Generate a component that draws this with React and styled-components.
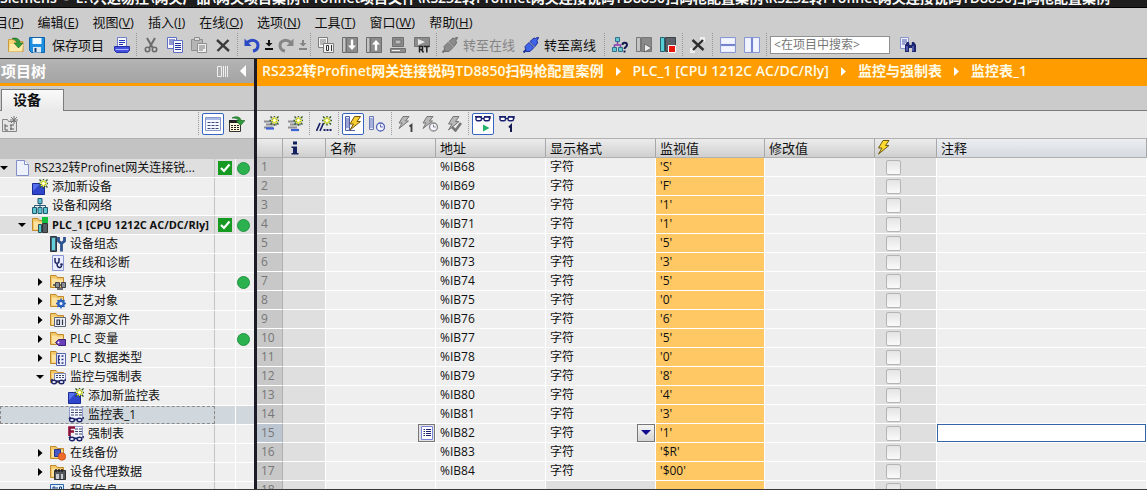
import React from 'react';
import styled, { createGlobalStyle, css } from 'styled-components';

const GlobalStyle = createGlobalStyle`
    * { box-sizing: border-box; }
    html, body, #root { height: 100%; }
    body {
        margin: 0;
        overflow: hidden;
        font-family: "Open Sans", "Noto Sans CJK SC", sans-serif;
        font-size: 12px;
        color: #101010;
        background: #cdcdcd;
    }
    button, input, select { font-family: inherit; font-size: inherit; color: inherit; }
`;

const PROJECT = 'RS232转Profinet网关连接锐码TD8850扫码枪配置案例';
const TITLE = `Siemens  -  E:\\兴达易控\\网关产品\\网关项目案例\\Profinet项目文件\\${PROJECT}\\${PROJECT}`;

const star = (x, y) => (
    <g transform={`translate(${x} ${y})`}>
        <path d="M0-5V5M-5 0H5M-4-4L4 4M4-4L-4 4" stroke="#2d5a32" strokeWidth="1.4" />
        <path d="M0-3.5V3.5M-3.5 0H3.5M-2.5-2.5L2.5 2.5M2.5-2.5L-2.5 2.5" stroke="#f6f23a" strokeWidth="1.2" />
        <circle r="1.4" fill="#fffff0" />
    </g>
);
const folder = (
    <g>
        <path d="M.5 1.5H6l1.5 2h6v10H.5z" fill="#f3c766" stroke="#c08a2c" />
        <path d="M2 4.5h4l1 1h6v7H2z" fill="#fbe2a0" />
    </g>
);
const glasses = (
    <g fill="#e8eeff" stroke="#1d2366" strokeWidth="1.4">
        <path d="M1 12.2L2.5 10M15 12.2L15.3 10M6 12.5h3" fill="none" />
        <ellipse cx="4" cy="13" rx="2.4" ry="1.8" />
        <ellipse cx="11.5" cy="13" rx="2.4" ry="1.8" />
    </g>
);
const spectacles = (
    <g fill="#fff" stroke="#1b2170" strokeWidth="1.4">
        <path d="M0 .8h7M9 .8h6v2" fill="none" />
        <rect x="1" y="1" width="5.500" height="3.800" rx="1.500" />
        <rect x="9" y="1" width="5.500" height="3.800" rx="1.500" />
        <path d="M6.500 2.500h2.500" />
    </g>
);
const sheet = (
    <g>
        <path d="M1.5.5h13v11h-13z" fill="#f3f5ff" stroke="#8f9bce" />
        <path d="M3 3h3M7 3h3M11 3h3M3 5.5h3M7 5.5h3M11 5.5h3M3 8h3M7 8h3M11 8h3" stroke="#3c4468" />
    </g>
);
const bolt = (fill, stroke) => <path d="M7 .5h6L9.500 5.500h3.500L2.500 14l3.500-6H2.500z" fill={fill} stroke={stroke} />;
const smallBolt = <path d="M5 .5h6L7.500 5h3L1 12.500 4 7H1z" fill="#b8b8b8" stroke="#777" />;
const clock = (stroke) => (
    <g fill="#f4f6ff" stroke={stroke}>
        <circle cx="11.5" cy="11" r="4" strokeWidth="1.3" />
        <path d="M11.5 8.5V11h2.3" fill="none" />
    </g>
);
const plug = (fill, stroke) => (
    <g fill={fill} stroke={stroke}>
        <path d="M.5 15.5l3-3" strokeWidth="2" />
        <path d="M2 9.500L6 5.500l5 5L7 14.500H3z" />
        <path d="M7 4.500L11 1l1.500.5L15 0l.5 1-1.500 2.500.5 2.500L12 9.500z" />
    </g>
);
const lines = (
    <path d="M1 5.5h9M3 8.5h11M1 11.5h9" stroke="#8e8e94" strokeWidth="2" fill="none" />
);

const icons = {
    open: <g><path d="M.5 2.5h5l1.500 2h8v10H.5z" fill="#f7d374" stroke="#c79a3d" /><path d="M2 7h13l-1 7.500H1z" fill="#fdeaa8" /><path d="M4 1.500c5-1.500 8 1 8 4.500h3l-4.500 5L6 6h3c0-2-2-3.500-5-4.500z" fill="#2f9a3a" stroke="#156320" strokeWidth=".6" /></g>,
    save: <g><path d="M.5.5h15v15h-13l-2-2z" fill="#1c8fe0" stroke="#1260a8" /><path d="M3.500 1h9v6h-9z" fill="#f4fbff" /><path d="M4 10h8v5.500H4z" fill="#dfe9f3" /><path d="M5.500 11h2v4h-2z" fill="#10457f" /></g>,
    print: <g><path d="M3.500.5h9v9h-9z" fill="#f5f7ff" stroke="#6f7fd0" /><path d="M5 3.500h6M5 5.500h6M5 7.500h4" stroke="#2733b0" /><path d="M.5 9.500h15v4l-2 2h-11l-2-2z" fill="#4450dd" stroke="#2530a8" /><path d="M1.500 12.500h13" stroke="#a9b2ff" /></g>,
    cut: <g fill="none" stroke="#6b6b6b"><path d="M4 1l5.500 9.500M12 1L6.500 10.500" strokeWidth="2" /><circle cx="4.500" cy="12.500" r="2.200" strokeWidth="1.600" /><circle cx="11.500" cy="12.500" r="2.200" strokeWidth="1.600" /></g>,
    copy: <g fill="#f8f9ff" stroke="#5f6fc4"><path d="M.5.5h9v11h-9z" /><path d="M2 3h6M2 5h6M2 7h6" stroke="#2632a0" /><path d="M6.500 3.500h9v12h-9z" /><path d="M8 6.500h6M8 8.500h6M8 10.500h6M8 12.500h6" stroke="#2632a0" /></g>,
    paste: <g stroke="#8f8f8f"><path d="M.5 2.500h11v11H.5z" fill="#b5b5b5" /><path d="M3.500.5h5v3h-5z" fill="#ddd" /><path d="M6.500 6.500h9v9h-9z" fill="#f0f0f0" /><path d="M8 9h6M8 11h6M8 13h4" stroke="#777" /></g>,
    del: <path d="M2 3l12 11M13.500 3L2.500 14" stroke="#3a3a3a" strokeWidth="2.400" fill="none" />,
    undo: <g fill="none" stroke="#2b49c4"><path d="M3 5.500c5-4 11-2 11 3 0 3-2 5-5 5.500" strokeWidth="3" /><path d="M.5 1.500v7.500h7z" fill="#2b49c4" stroke="none" /></g>,
    redo: <g fill="none" stroke="#858585"><path d="M13 5.500c-5-4-11-2-11 3 0 3 2 5 5 5.500" strokeWidth="3" /><path d="M15.500 1.500v7.500h-7z" fill="#858585" stroke="none" /></g>,
    compile: <g fill="#f2f2f2" stroke="#7c7c7c"><path d="M.5.5h9v10h-9z" /><path d="M2 3h6M2 5h6M2 7h3" /><path d="M5.500 6.500h10v9h-10z" /><path d="M8.500 8.500h2v5h-2zM13.500 8v6" stroke="#333" /></g>,
    download: <g><path d="M.5.500h3.500v15H.5z" fill="#c4c4c4" stroke="#6c6c6c" /><path d="M4.500.5h11v15h-11z" fill="#8b8b8b" stroke="#6c6c6c" /><path d="M8.800 2.500h2.400v6h2.800l-4 4.500-4-4.500h2.800z" fill="#fff" /></g>,
    upload: <g><path d="M.5.500h3.500v15H.5z" fill="#c4c4c4" stroke="#6c6c6c" /><path d="M4.500.5h11v15h-11z" fill="#8b8b8b" stroke="#6c6c6c" /><path d="M8.800 13.500h2.400v-6h2.800L10 3 6 7.500h2.800z" fill="#fff" /></g>,
    sim: <g fill="#8c8c8c" stroke="#6e6e6e"><path d="M2.500.5h11v9h-11z" /><path d="M5 3h6v4H5z" fill="#bbb" /><path d="M.5 11.500h15v4H.5z" /><path d="M2 13.500h8" stroke="#eee" /></g>,
    rt: <g><path d="M.5.5h15v9H.5z" fill="#8c8c8c" stroke="#737373" /><path d="M4 2l7 3-7 3z" fill="#e8e8e8" /><path d="M5.500 15.500v-6h3v3h-3m2 0l2 3M10 9.500h5.500M12.800 9.500v6" stroke="#222" strokeWidth="1.500" fill="none" /></g>,
    plugOff: plug('#8a8a8a', '#6f6f6f'),
    plugOn: plug('#4064e8', '#1c2f9c'),
    access: <g><path d="M3.500.5h4v4h-4zM.5 10.500h4v4h-4zM6.500 10.500h4v4h-4z" fill="#63c8cc" stroke="#2f6f8f" /><path d="M5.500 5v3M2.500 10V8h6v2" stroke="#8b3fae" fill="none" strokeWidth="1.500" /><path d="M10.500 8c0-3 4.500-3 4.500 0 0 2-2.500 2-2.500 4M12.500 13.500v2" stroke="#101850" strokeWidth="1.900" fill="none" /></g>,
    start: <g><path d="M.5.5h4v14h-4z" fill="#c4c4c4" stroke="#777" /><path d="M5.500.5h10v14h-10z" fill="#8a8a8a" stroke="#777" /><path d="M8.500 7l7 4-7 4z" fill="#eee" stroke="#555" strokeWidth=".7" /></g>,
    stop: <g><path d="M.5.5h4v14h-4z" fill="#56cdd2" stroke="#24626d" /><path d="M5.500.5h10v14h-10z" fill="#5b6168" stroke="#3d4247" /><path d="M8.500 8.500h7v7h-7z" fill="#e8140c" stroke="#fff" /></g>,
    cross: <g><path d="M0 11h5v5H0zM10 0h5v5h-5z" fill="#efefef" /><path d="M2.500 3l11 10M13 3L3 13" stroke="#2e2e2e" strokeWidth="2.400" /></g>,
    splitH: <g><path d="M.5.500h15v15H.5z" fill="#dfe6ff" stroke="#8b97cf" /><path d="M1 8h14" stroke="#5063bd" strokeWidth="1.500" /><path d="M1.500 1.500h13v5h-13zM1.500 9.500h13v5h-13z" fill="#fff" opacity=".6" /></g>,
    splitV: <g><path d="M.5.500h15v15H.5z" fill="#dfe6ff" stroke="#8b97cf" /><path d="M8 1v14" stroke="#5063bd" strokeWidth="1.500" /><path d="M1.500 1.500h5v13h-5zM9.500 1.500h5v13h-5z" fill="#fff" opacity=".6" /></g>,
    find: <g><path d="M.5.5h8v11h-8z" fill="#eef0ff" stroke="#8995cf" /><path d="M2 3h5M2 5h5M2 7h3" stroke="#4655a8" /><path d="M5 8l2-3h2l.5 3h2l.5-3h2l2 3v7h-4v-4H9v4H5z" fill="#1d2570" /><path d="M7 9v5M13 9v5" stroke="#7f8ae0" /></g>,
    newGroup: <g><path d="M.5 3.500h5l1 2h8v10H.5z" fill="#e4e4e4" stroke="#858585" /><path d="M3 8v6h3M3 10h3M8 9h4M8 13h4M9 9v5" stroke="#5d5d5d" fill="none" /><path d="M12 0v8M8 4h8M9 1l6 6M15 1L9 7" stroke="#777" /></g>,
    details: <g><path d="M.5 1.500h15v13H.5z" fill="#f6f8ff" stroke="#8797c8" /><path d="M1 3h14" stroke="#a9b9e8" strokeWidth="2" /><path d="M2.500 6.500h3M6.500 6.500h3M10.500 6.500h3M2.500 9.500h3M6.500 9.500h3M10.500 9.500h3M2.500 12.500h3M6.500 12.500h3M10.500 12.500h3" stroke="#3b4a77" /></g>,
    jump: <g><path d="M.5 4.500h11v11H.5z" fill="#fff6dc" stroke="#333" /><path d="M0 4h12v3H0z" fill="#222" /><path d="M2 9.500h8M2 11.500h8M2 13.500h8" stroke="#222" strokeDasharray="2 1" /><path d="M3 2c4-2.500 9-1 9 2.500h4L11.500 9.500 7 4.500h2.500C9 2.500 6 2 3 2z" fill="#2f9a3a" stroke="#186020" strokeWidth=".6" /></g>,
    insert: <g>{lines}<path d="M3 12.500h8" stroke="#3d62d8" strokeWidth="2.200" />{star(11.500, 4.500)}</g>,
    add: <g>{lines}<path d="M4 14h8" stroke="#3d62d8" strokeWidth="2.200" />{star(11.500, 4.500)}</g>,
    comment: <g><path d="M.500 15L4 7M4 15L7.500 7" stroke="#1c2366" strokeWidth="1.700" /><path d="M7.500 14h2M10.500 14h2M13.500 14h2" stroke="#1c2366" strokeWidth="2" />{star(11, 4.500)}</g>,
    watchAll: <g><path d="M.5.5h4v14h-4z" fill="#dfe5ff" stroke="#5061a8" /><path d="M1 3h4M1 5h4M1 7h4M1 9h4M1 11h4" stroke="#5061a8" /><path d="M3 14.500h7" stroke="#5061a8" /><g transform="translate(2.500 0)">{bolt('#f7cf2e', '#75540c')}</g></g>,
    watchClock: <g><path d="M.5.5h4v13h-4z" fill="#dfe5ff" stroke="#6b7bb8" /><path d="M1 3h4M1 5h4M1 7h4M1 9h4M1 11h4" stroke="#6b7bb8" />{clock('#5263b8')}</g>,
    modNow: <g>{smallBolt}<path d="M11.500 10.500l2-1.500v7" stroke="#444" strokeWidth="1.900" fill="none" /></g>,
    modClock: <g>{smallBolt}{clock('#888')}</g>,
    modCheck: <g>{bolt('#b8b8b8', '#777')}<path d="M6 11l3.500 3.500L15 7" stroke="#777" strokeWidth="2.600" fill="none" /></g>,
    monitor: <g>{spectacles}<path d="M8 8.500l6.500 3.500L8 15.500z" fill="#26b36a" /></g>,
    monitorOnce: <g>{spectacles}<path d="M10 11.500l2-2V16" stroke="#14194f" strokeWidth="2" fill="none" /></g>,
    flash: bolt('#ffd92e', '#6d5a10'),
    info: <path d="M6 1.500h4v3H6zM4.500 6.500H10V13h1.500v1.500h-7V13H6V8H4.500z" fill="#14205f" />,

    project: <g><path d="M2.500.5h8l4 4v11h-12z" fill="#eef2ff" stroke="#8390c8" /><path d="M10.500.5v4h4" fill="#fff" stroke="#8390c8" /></g>,
    addNew: <g><path d="M.5 4.500h12v11H.5z" fill="#2f46cc" stroke="#1b2a92" /><path d="M1 5h7l-7 7z" fill="#5470ec" />{star(11.500, 4.500)}</g>,
    network: <g fill="#5fc4d0" stroke="#225a72"><path d="M6 .5h4v5H6zM.5 9.500h4v6h-4zM6 9.500h4v6H6zM11.500 9.500h4v6h-4z" /><path d="M8 6v3M2.500 9V7.500h11V9" fill="none" /></g>,
    plc: <g>{folder}<path d="M6.500 7.500h3v8h-3z" fill="#4fc8cc" stroke="#2c4d58" /><path d="M10.500 6.500h5v9h-5z" fill="#555c62" stroke="#333" /><path d="M10 0h6v6h-6z" fill="#12bf3d" /></g>,
    config: <g><path d="M.5.5h6v15h-6z" fill="#4a5a66" stroke="#283743" /><path d="M2 2h3v12H2z" fill="#5fd0dc" /><path d="M8.500 1v4l3 2.500 3-2.500V1M11.500 7v8.500" stroke="#2d5390" strokeWidth="2.800" fill="none" /></g>,
    diag: <g><path d="M2.500.5h11v15h-11z" fill="#e9edff" stroke="#8a97d4" /><path d="M5 3v3c0 3 4 3 4 0V3M7 8.500c0 5 4.500 5 4.500 2" stroke="#1d2560" strokeWidth="1.500" fill="none" /><circle cx="11.500" cy="9.500" r="1.300" fill="#1d2560" /></g>,
    blocks: <g>{folder}<path d="M5.500 8.500h4v5h-4zM11.500 8.500h4v5h-4z" fill="#8b8f94" stroke="#3f4347" /><path d="M3 11h2M9.500 11h2M7 15h6" stroke="#3f4347" strokeWidth="1.500" /></g>,
    tech: <g>{folder}<circle cx="11" cy="10.500" r="3.500" fill="#3b78d8" stroke="#1f4d9d" /><path d="M11 5.500v10M6 10.500h10M7.500 7l7 7M14.500 7l-7 7" stroke="#2a62be" strokeWidth="1.500" /><circle cx="11" cy="10.500" r="1.500" fill="#eaf2ff" /></g>,
    source: <g>{folder}<path d="M4.500 5.500h11v9h-11z" fill="#eceef6" stroke="#5e6478" /><path d="M7 8h2.500v4.500H7zM12.500 7.500v5.500" stroke="#2d3347" strokeWidth="1.200" fill="none" /></g>,
    tags: <g>{folder}<path d="M5.500 11.500l3-3h7v6h-7z" fill="#6a3fb8" stroke="#3c1f7c" /><circle cx="8.500" cy="11.500" r="1" fill="#fff" /></g>,
    types: <g>{folder}<path d="M6.500 3.500h9v12h-9z" fill="#eef0ff" stroke="#5565b0" /><path d="M10 6H8.500v7H10M8.500 9.500H10M11.500 6h2M11.500 9.500h2M11.500 13h2" stroke="#2b3580" strokeWidth="1.300" fill="none" /></g>,
    tables: <g>{folder}<path d="M4.500 4.500h11v7h-11z" fill="#f4f6ff" stroke="#7a87bd" /><path d="M6 6.500h2M9 6.500h2M12 6.500h2M6 8.500h2M9 8.500h2M12 8.500h2" stroke="#3c4468" />{glasses}</g>,
    watch: <g>{sheet}{glasses}</g>,
    force: <g>{sheet}<path d="M0 0h7v11H0z" fill="#f0f0f0" /><path d="M1.500 10V1.500H7M1.500 5.500H6" stroke="#8e1038" strokeWidth="2.600" fill="none" />{glasses}</g>,
    backup: <g>{folder}<path d="M4.500 4.500h6v7h-6z" fill="#4658c8" stroke="#26348c" /><circle cx="12" cy="11.500" r="3.800" fill="#ef6a2a" stroke="#b3410f" strokeWidth=".6" /></g>,
    proxy: <g>{folder}<path d="M4.500 6.500h11v9h-11z" fill="#54585c" stroke="#2d2f31" /><path d="M6 5v3M9 5v3M12 5v3" stroke="#222" strokeWidth="1.500" /><path d="M6 10h3v5H6zM11 10h2v5h-2z" fill="#c9cdd1" /></g>,
    program: <g><path d="M.5 1.500h13v14H.5z" fill="#e3f1ff" stroke="#2a66b0" /><path d="M3 4h2v5H3zM7 4v5M9.500 4h2v5h-2z" stroke="#173a7c" fill="none" /></g>
};

const Icon = ({ name }) => (
    <Glyph viewBox="0 0 16 16" fill="none" aria-hidden="true">{icons[name]}</Glyph>
);

const menus = [
    ['项目', 'P'], ['编辑', 'E'], ['视图', 'V'], ['插入', 'I'], ['在线', 'O'],
    ['选项', 'N'], ['工具', 'T'], ['窗口', 'W'], ['帮助', 'H']
];

const tree = [
    { level: 0, arrow: 'down', icon: 'project', name: 'RS232转Profinet网关连接锐...', shaded: true, check: true, dot: true },
    { level: 1, icon: 'addNew', name: '添加新设备' },
    { level: 1, icon: 'network', name: '设备和网络' },
    { level: 1, arrow: 'down', icon: 'plc', name: 'PLC_1 [CPU 1212C AC/DC/Rly]', shaded: true, strong: true, check: true, dot: true },
    { level: 2, icon: 'config', name: '设备组态' },
    { level: 2, icon: 'diag', name: '在线和诊断' },
    { level: 2, arrow: 'right', icon: 'blocks', name: '程序块', dot: true },
    { level: 2, arrow: 'right', icon: 'tech', name: '工艺对象' },
    { level: 2, arrow: 'right', icon: 'source', name: '外部源文件' },
    { level: 2, arrow: 'right', icon: 'tags', name: 'PLC 变量', dot: true },
    { level: 2, arrow: 'right', icon: 'types', name: 'PLC 数据类型' },
    { level: 2, arrow: 'down', icon: 'tables', name: '监控与强制表' },
    { level: 3, icon: 'addNew', name: '添加新监控表' },
    { level: 3, icon: 'watch', name: '监控表_1', selected: true },
    { level: 3, icon: 'force', name: '强制表' },
    { level: 2, arrow: 'right', icon: 'backup', name: '在线备份' },
    { level: 2, arrow: 'right', icon: 'proxy', name: '设备代理数据' },
    { level: 2, icon: 'program', name: '程序信息' }
];

const values = ['S', 'F', '1', '1', '5', '3', '5', '0', '6', '5', '0', '8', '4', '3', '1', '$R', '$00'];
const rows = values.map((value, i) => ({ no: i + 1, address: `%IB${68 + i}`, format: '字符', value: `'${value}'` }));
rows.push({ no: 18, address: '', format: '', value: '' });
const ACTIVE_ROW = 15;

const Tool = ({ icon, label, ...rest }) => (
    <ToolButton aria-label={label} title={label} {...rest}><Icon name={icon} /></ToolButton>
);

const DropArrow = ({ label, $dim }) => (
    <DropButton aria-label={label} $dim={$dim}>
        <svg width="8" height="10" viewBox="0 0 8 10" aria-hidden="true">
            <path d="M3 0h2v3h2.500L4 6.500.5 3H3zM0 8h8v2H0z" fill="currentColor" />
        </svg>
    </DropButton>
);

const MainToolbar = () => (
    <Toolbar>
        <Tool icon="open" label="打开项目" $width={22} />
        <LabelButton $save><Icon name="save" />保存项目</LabelButton>
        <Tool icon="print" label="打印" />
        <Separator $width={5} />
        <Tool icon="cut" label="剪切" />
        <Tool icon="copy" label="复制" />
        <Tool icon="paste" label="粘贴" />
        <Tool icon="del" label="删除" />
        <Separator $width={5} />
        <Tool icon="undo" label="撤销" />
        <DropArrow label="撤销列表" />
        <Tool icon="redo" label="重做" />
        <DropArrow label="重做列表" $dim />
        <Separator $width={6} />
        <Tool icon="compile" label="编译" />
        <Tool icon="download" label="下载到设备" />
        <Tool icon="upload" label="从设备上传" />
        <Tool icon="sim" label="启动仿真" />
        <Tool icon="rt" label="启动运行系统" />
        <Separator $width={6} />
        <LabelButton disabled><Icon name="plugOff" />转至在线</LabelButton>
        <LabelButton><Icon name="plugOn" />转至离线</LabelButton>
        <Separator $width={6} />
        <Tool icon="access" label="可访问的设备" />
        <Tool icon="start" label="启动 CPU" />
        <Tool icon="stop" label="停止 CPU" />
        <Separator $width={6} />
        <Tool icon="cross" label="交叉引用" />
        <Separator $width={6} />
        <Tool icon="splitH" label="水平拆分" />
        <Tool icon="splitV" label="垂直拆分" />
        <Separator $width={6} />
        <Search aria-label="在项目中搜索" placeholder="<在项目中搜索>" />
        <Tool icon="find" label="搜索" />
    </Toolbar>
);

const TreeItem = ({ item }) => (
    <TreeRow $shaded={item.shaded} $selected={item.selected}>
        <TreeName $level={item.level} $selected={item.selected}>
            <Expander>
                {item.arrow && (
                    <ExpandButton aria-label={item.arrow === 'down' ? '折叠' : '展开'}>
                        <svg width="8" height="8" viewBox="0 0 8 8" aria-hidden="true">
                            <path d={item.arrow === 'down' ? 'M0 2h8L4 6z' : 'M2 0l4.500 4L2 8z'} />
                        </svg>
                    </ExpandButton>
                )}
            </Expander>
            <Icon name={item.icon} />
            <TreeLabel $strong={item.strong}>{item.name}</TreeLabel>
        </TreeName>
        <TreeStatus>
            {item.check && (
                <svg width="14" height="14" viewBox="0 0 14 14" role="img" aria-label="正常">
                    <path d="M0 0h14v14H0z" fill="#169a22" />
                    <path d="M3 7l3 3 5.500-6.500" stroke="#fff" strokeWidth="2.200" fill="none" />
                </svg>
            )}
        </TreeStatus>
        <TreeStatus>{item.dot && <Dot />}</TreeStatus>
    </TreeRow>
);

const WatchRow = ({ row }) => {
    const active = row.no === ACTIVE_ROW;
    return (
        <tr>
            <NumberCell scope="row" $active={active}>{row.no}</NumberCell>
            <Cell $tone="#dfdfdf" />
            <Cell $flush>
                {active && <CellButton aria-label="选择变量">
                    <svg width="12" height="14" viewBox="0 0 12 14" aria-hidden="true">
                        <path d="M.5.5h11v13H.5z" fill="#fff" stroke="#7784d8" />
                        <path d="M2.500 3.500H4M5 3.500h5M2.500 5.500H4M5 5.500h5M2.500 7.500H4M5 7.500h5M2.500 9.500H4M5 9.500h5" stroke="#1c2270" />
                    </svg>
                </CellButton>}
            </Cell>
            <Cell>{row.address}</Cell>
            <Cell $tone={row.format ? undefined : '#dfdfdf'} $flush={active}>
                {active ? (
                    <SelectBox>
                        <FormatSelect aria-label="显示格式" defaultValue="字符">
                            <option>字符</option>
                            <option>十六进制</option>
                            <option>二进制</option>
                        </FormatSelect>
                        <SelectArrow>
                            <svg width="10" height="6" viewBox="0 0 10 6" aria-hidden="true">
                                <path d="M0 0h10L5 5z" fill="#120a8f" />
                            </svg>
                        </SelectArrow>
                    </SelectBox>
                ) : row.format}
            </Cell>
            <Cell $tone="#ffc864">{row.value}</Cell>
            <Cell />
            <Cell $tone="#dfdfdf" $check><Check type="checkbox" aria-label={`修改 ${row.no}`} /></Cell>
            <Cell $flush>{active && <CommentInput aria-label="注释" />}</Cell>
        </tr>
    );
};

const App = () => (
    <Window>
        <GlobalStyle />
        <TitleBar><span>{TITLE}</span></TitleBar>
        <MenuBar>
            {menus.map(([name, key]) => (
                <MenuButton key={key}>{name}(<u>{key}</u>)</MenuButton>
            ))}
        </MenuBar>
        <MainToolbar />
        <Workspace>
            <Sidebar>
                <PanelHeader>
                    <span>项目树</span>
                    <PanelActions>
                        <PlainButton aria-label="自动折叠">
                            <svg width="11" height="11" viewBox="0 0 11 11" aria-hidden="true">
                                <path d="M.5.5h4v10h-4zM6.500 0v11M8.500 0v11M10.500 0v11" fill="none" stroke="#f0f0f0" />
                            </svg>
                        </PlainButton>
                        <PlainButton aria-label="折叠">
                            <svg width="6" height="12" viewBox="0 0 6 12" aria-hidden="true"><path d="M6 0v12L0 6z" fill="#fff" /></svg>
                        </PlainButton>
                    </PanelActions>
                </PanelHeader>
                <TabStrip><Tab>设备</Tab></TabStrip>
                <PanelToolbar>
                    <Tool icon="newGroup" label="新建组" $width={16} />
                    <Spacer />
                    <Separator $width={5} />
                    <Tool icon="details" label="详细视图" $pressed />
                    <Tool icon="jump" label="跳转" />
                </PanelToolbar>
                <TreeHead />
                <Tree>{tree.map((item, i) => <TreeItem key={i} item={item} />)}</Tree>
            </Sidebar>
            <Editor>
                <Breadcrumb>
                    {[PROJECT, 'PLC_1 [CPU 1212C AC/DC/Rly]', '监控与强制表', '监控表_1'].map((part, i) => (
                        <React.Fragment key={part}>
                            {i > 0 && <svg width="5" height="9" viewBox="0 0 5 9" aria-hidden="true"><path d="M0 0l5 4.500L0 9z" fill="#fff" /></svg>}
                            <a href="#">{part}</a>
                        </React.Fragment>
                    ))}
                </Breadcrumb>
                <TabStrip />
                <PanelToolbar>
                    <Tool icon="insert" label="插入行" />
                    <Tool icon="add" label="添加行" />
                    <Separator $width={5} />
                    <Tool icon="comment" label="插入注释行" />
                    <Separator $width={5} />
                    <Tool icon="watchAll" label="显示所有修改列" $pressed />
                    <Tool icon="watchClock" label="显示扩展模式列" />
                    <Separator $width={5} />
                    <Tool icon="modNow" label="立即修改" />
                    <Tool icon="modClock" label="使用触发器修改" />
                    <Tool icon="modCheck" label="启用外围设备输出" />
                    <Separator $width={5} />
                    <Tool icon="monitor" label="全部监视" $pressed />
                    <Tool icon="monitorOnce" label="立即监视" />
                </PanelToolbar>
                <WatchTable>
                    <colgroup>
                        {[26, 43, 110, 110, 110, 109, 110, 62].map((w, i) => <Col key={i} $width={w} />)}
                        <col />
                    </colgroup>
                    <thead>
                        <tr>
                            <HeadCell />
                            <HeadCell><Icon name="info" /></HeadCell>
                            <HeadCell>名称</HeadCell>
                            <HeadCell>地址</HeadCell>
                            <HeadCell>显示格式</HeadCell>
                            <HeadCell>监视值</HeadCell>
                            <HeadCell>修改值</HeadCell>
                            <HeadCell $icon><Icon name="flash" /></HeadCell>
                            <HeadCell $blue>注释</HeadCell>
                        </tr>
                    </thead>
                    <tbody>{rows.map(row => <WatchRow key={row.no} row={row} />)}</tbody>
                </WatchTable>
            </Editor>
        </Workspace>
    </Window>
);

const Window = styled.div`
    display: flex;
    flex-direction: column;
    height: 100vh;
    overflow: hidden;
    border-bottom: 1px solid #3a3a3a;
`;

const TitleBar = styled.header`
    display: flex;
    flex: none;
    align-items: flex-end;
    height: 8px;
    padding-bottom: 2px;
    overflow: hidden;
    background: #1e1e1e;
    border-bottom: 1px solid #000;
    color: #fff;
    font-size: 14px;
    font-weight: 600;
    line-height: 14px;
    white-space: pre;
`;

const MenuBar = styled.nav`
    display: flex;
    flex: none;
    gap: 14px;
    height: 26px;
    margin-left: -18px;
    padding-top: 2px;
`;

const plainButton = css`
    display: flex;
    flex: none;
    align-items: center;
    padding: 0;
    border: 0;
    background: none;
`;

const PlainButton = styled.button`
    ${plainButton}
`;

const MenuButton = styled.button`
    ${plainButton}
    font-size: 13px;
    line-height: 20px;
`;

const Glyph = styled.svg`
    flex: none;
    width: 16px;
    height: 16px;
`;

const Toolbar = styled.div`
    display: flex;
    flex: none;
    align-items: center;
    height: 25px;
    padding: 0 0 3px 5px;
    border-bottom: 1px solid #2c2c2c;
`;

const ToolButton = styled.button`
    ${plainButton}
    justify-content: center;
    width: ${props => props.$width || 24}px;
    height: 22px;
    ${props => props.$pressed && css`
        width: 22px;
        margin: 0 1px;
        background: #fff;
        border: 1px solid #3565c0;
        border-radius: 2px;
    `}
`;

const LabelButton = styled.button`
    ${plainButton}
    gap: ${props => props.$save ? 7 : 5}px;
    padding: 0 6px 0 2px;
    font-size: 13px;
    line-height: 20px;
    &:disabled { color: #858585; }
`;

const DropButton = styled.button`
    ${plainButton}
    justify-content: center;
    width: 10px;
    color: ${props => props.$dim ? '#858585' : '#111'};
`;

const Separator = styled.span`
    flex: none;
    width: ${props => props.$width}px;
    height: 24px;
    background: repeating-linear-gradient(#999 0 1px, transparent 1px 2px) 2px 0 / 1px 100% no-repeat;
`;

const Search = styled.input`
    width: 120px;
    height: 18px;
    margin-right: 6px;
    padding: 0 3px;
    border: 1px solid #909090;
    border-radius: 0;
    background: #fff;
    &::placeholder { color: #777; opacity: 1; }
`;

const Workspace = styled.main`
    display: flex;
    flex: 1;
    min-height: 0;
`;

const Sidebar = styled.aside`
    display: flex;
    flex: none;
    flex-direction: column;
    width: 257px;
    overflow: hidden;
    border-right: 3px solid #1b1b28;
    background: #efefef;
`;

const Editor = styled.section`
    display: flex;
    flex: 1;
    flex-direction: column;
    min-width: 0;
    overflow: hidden;
    background: #efefef;
`;

const PanelHeader = styled.div`
    display: flex;
    flex: none;
    align-items: center;
    justify-content: space-between;
    height: 27px;
    padding: 0 8px 0 1px;
    border-bottom: 3px solid #ff9c00;
    background: linear-gradient(#b4b4b4, #a4a4a4);
    color: #fff;
    font-size: 15px;
    font-weight: 700;
    line-height: 20px;
`;

const PanelActions = styled.div`
    display: flex;
    gap: 12px;
`;

const TabStrip = styled.div`
    display: flex;
    flex: none;
    align-items: flex-end;
    height: 25px;
    padding-left: 1px;
    border-bottom: 1px solid #7c7c7c;
    background: #cbcbcb;
`;

const Tab = styled.button`
    width: 63px;
    height: 22px;
    margin-bottom: -1px;
    padding: 0 0 2px 11px;
    border: 1px solid #7c7c7c;
    border-bottom: 0;
    background: linear-gradient(#fafafa, #e9e9e9);
    font-size: 14px;
    font-weight: 700;
    line-height: 18px;
    text-align: left;
`;

const PanelToolbar = styled.div`
    display: flex;
    flex: none;
    align-items: center;
    height: 27px;
    padding: 0 5px 1px 2px;
    background: #e9e9e9;
`;

const Spacer = styled.span`
    flex: 1;
`;

const TreeHead = styled.div`
    flex: none;
    height: 21px;
    border-top: 1px solid #b0b0b0;
    background: #c3c3c3;
`;

const Tree = styled.ul`
    margin: 0;
    padding: 0;
    list-style: none;
`;

const TreeRow = styled.li`
    display: grid;
    grid-template-columns: 1fr 20px 19px;
    height: 19px;
    border-bottom: 1px solid #fff;
    background: ${props => props.$selected ? '#d0d7dd' : props.$shaded ? '#dfdfdf' : '#efefef'};
`;

const TreeName = styled.div`
    display: flex;
    align-items: center;
    min-width: 0;
    padding-left: ${props => props.$level * 18}px;
    border-right: 1px solid #c4c4c4;
    ${props => props.$selected && css`
        outline: 1px dashed #8a8a8a;
        outline-offset: -1px;
    `}
`;

const Expander = styled.span`
    flex: none;
    width: 14px;
`;

const ExpandButton = styled.button`
    ${plainButton}
`;

const TreeLabel = styled.span`
    margin-left: 4px;
    line-height: 18px;
    white-space: nowrap;
    ${props => props.$strong && css`
        font-size: 11px;
        font-weight: 700;
    `}
`;

const TreeStatus = styled.div`
    display: flex;
    align-items: center;
    justify-content: center;
    & + & {
        justify-content: flex-start;
        padding-left: 1px;
        border-left: 1px solid #fff;
    }
`;

const Dot = styled.span`
    width: 13px;
    height: 13px;
    border: 1px solid #229443;
    border-radius: 50%;
    background: #2bb24e;
`;

const Breadcrumb = styled.nav`
    display: flex;
    flex: none;
    align-items: center;
    gap: 12px;
    height: 27px;
    padding: 0 5px 3px;
    background: #ff9c00;
    font-size: 14px;
    font-weight: 600;
    line-height: 20px;
    white-space: nowrap;
    a { color: #fffbe6; text-decoration: none; }
`;

const WatchTable = styled.table`
    width: 100%;
    table-layout: fixed;
    border-collapse: separate;
    border-spacing: 0;
`;

const Col = styled.col`
    width: ${props => props.$width}px;
`;

const HeadCell = styled.th`
    height: 20px;
    padding: 0 ${props => props.$icon ? 1 : 4}px 1px;
    border-top: 1px solid #b0b0b0;
    border-right: 1px solid #a8a8a8;
    border-bottom: 1px solid #b0b0b0;
    background: ${props => props.$blue ? 'linear-gradient(#eceef1, #d5dae1)' : 'linear-gradient(#ececec, #cfcfcf)'};
    font-size: 13px;
    font-weight: 400;
    line-height: 16px;
    text-align: left;
    svg { display: block; }
`;

const cell = css`
    height: 19px;
    border-right: 1px solid #fff;
    border-bottom: 1px solid #fff;
    line-height: 18px;
    text-align: left;
    font-weight: 400;
`;

const NumberCell = styled.th`
    ${cell}
    padding: 0 4px;
    border-right-color: #b0b0b0;
    background: ${props => props.$active ? '#bcc6d0' : '#c8c8c8'};
    color: #777;
`;

const Cell = styled.td`
    ${cell}
    padding: ${props => props.$flush ? 0 : props.$check ? '0 11px' : '0 4px'};
    background: ${props => props.$tone || '#efefef'};
`;

const CellButton = styled.button`
    ${plainButton}
    justify-content: center;
    width: 17px;
    height: 18px;
    margin-left: auto;
    border: 1px solid #777;
    background: #e2e2e6;
`;

const SelectBox = styled.div`
    display: flex;
    height: 18px;
`;

const FormatSelect = styled.select`
    flex: 1;
    min-width: 0;
    padding: 0 4px;
    border: 0;
    background: none;
    appearance: none;
    line-height: 18px;
`;

const SelectArrow = styled.span`
    display: flex;
    align-items: center;
    justify-content: center;
    width: 18px;
    border: 1px solid #777;
    background: linear-gradient(#f4f4f4, #d4d4d4);
    pointer-events: none;
`;

const Check = styled.input`
    display: block;
    width: 15px;
    height: 15px;
    margin: 0;
    appearance: none;
    border: 1px solid #b4b4b4;
    border-radius: 2px;
    background: linear-gradient(#e4e4e4, #fafafa);
`;

const CommentInput = styled.input`
    display: block;
    width: 100%;
    height: 18px;
    padding: 0 4px;
    border: 1px solid #3565a8;
    border-radius: 0;
    background: #fff;
`;

export default App;
